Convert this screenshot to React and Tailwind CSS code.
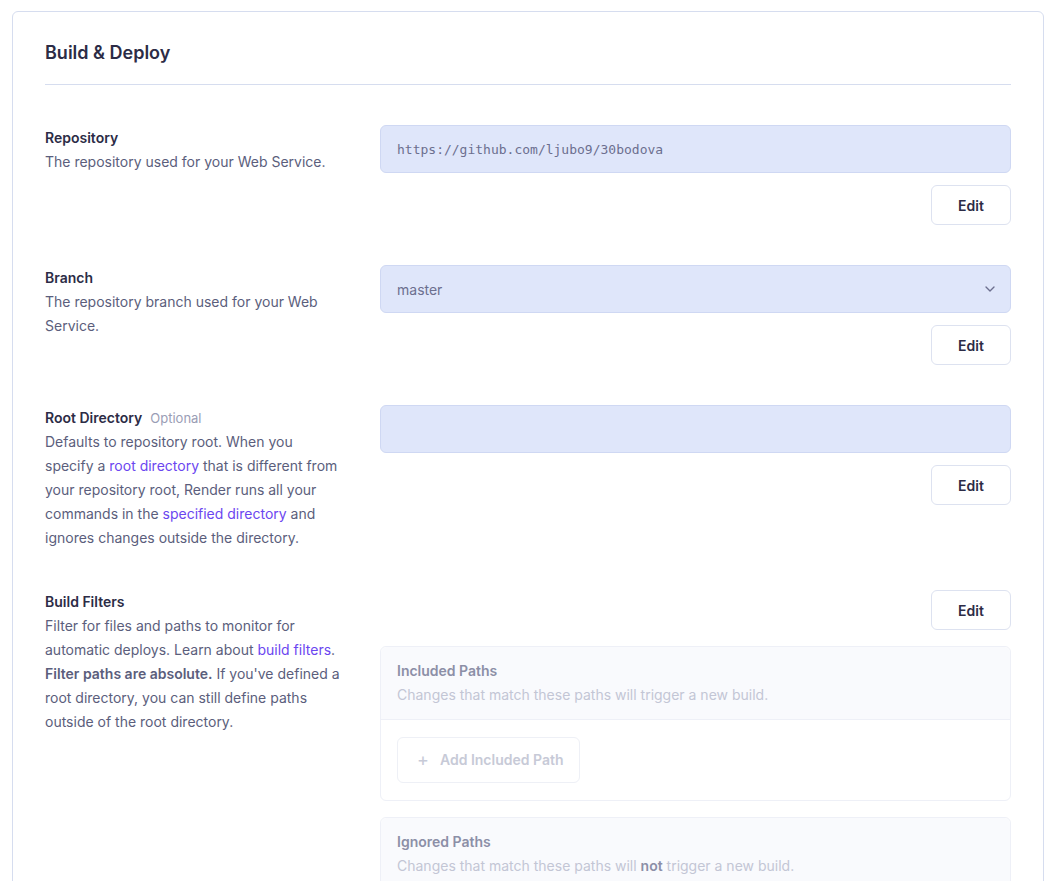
import React from "react";

const font = { fontFamily: "Inter, 'Noto Sans', sans-serif" };

function EditButton() {
  return (
    <button className="h-10 w-20 rounded-md border border-[#dde2f0] bg-white pt-[2px] text-sm font-semibold text-[#2c2c46]">
      Edit
    </button>
  );
}

function Row({ left, children }) {
  return (
    <div className="mb-10 flex gap-[39px]">
      <div className="w-[296px] shrink-0 translate-y-px text-sm leading-6 text-[#5b5e7c]">{left}</div>
      <div className="flex min-w-0 flex-1 flex-col">{children}</div>
    </div>
  );
}

function Label({ children, optional }) {
  return (
    <div className="font-semibold text-[#2c2c46]">
      {children}
      {optional && <span className="ml-2 text-[13px] font-normal text-[#9a9db5]">Optional</span>}
    </div>
  );
}

const Link = ({ children }) => <span className="text-[#6b46f0]">{children}</span>;

function PathBox({ title, desc, button }) {
  return (
    <div className="rounded-md border border-[#eef0f7]">
      <div className="rounded-t-md border-b border-[#eef0f7] bg-[#f9fafd] px-4 py-3 text-sm leading-6">
        <div className="font-semibold text-[#8c8fa7]">{title}</div>
        <div className="text-[#c3c6d5]">{desc}</div>
      </div>
      {button && (
        <div className="px-4 py-[17px]">
          <div className="inline-flex h-[46px] items-center gap-[11px] whitespace-nowrap rounded-md border border-[#eef0f6] pl-[19px] pr-[15px] text-sm font-semibold text-[#c7cad7]">
            <span className="text-lg font-normal leading-none">+</span>
            <span>{button}</span>
          </div>
        </div>
      )}
    </div>
  );
}

export default function App() {
  return (
    <div className="min-h-[881px] bg-white pl-3 pr-[8px] pt-[11px]" style={font}>
      <div className="h-[900px] rounded-md border border-[#d6ddef] bg-white px-8 pt-[29px]">
        <h2 className="border-b border-[#d6ddef] pb-[19px] text-lg font-semibold leading-6 text-[#2c2c46]">
          Build &amp; Deploy
        </h2>
        <div className="pt-10">
          <Row
            left={
              <>
                <Label>Repository</Label>
                <div>The repository used for your Web Service.</div>
              </>
            }
          >
            <div className="flex h-12 items-center rounded-md border border-[#cfd8f3] bg-[#dfe6fa] px-4 pt-[2px] text-[13px] text-[#6c6f8f]" style={{ fontFamily: "'DejaVu Sans Mono', monospace" }}>
              https://github.com/ljubo9/30bodova
            </div>
            <div className="mt-3 flex justify-end">
              <EditButton />
            </div>
          </Row>
          <Row
            left={
              <>
                <Label>Branch</Label>
                <div>The repository branch used for your Web Service.</div>
              </>
            }
          >
            <div className="flex h-12 items-center justify-between rounded-md border border-[#cfd8f3] bg-[#dfe6fa] pl-4 pr-3 text-sm text-[#6c6f8f]">
              <span className="pt-[2px]">master</span>
              <svg width="16" height="16" viewBox="0 0 24 24" fill="none" stroke="#6c6f8f" strokeWidth="2" strokeLinecap="round" strokeLinejoin="round">
                <path d="M6 9l6 6 6-6" />
              </svg>
            </div>
            <div className="mt-3 flex justify-end">
              <EditButton />
            </div>
          </Row>
          <Row
            left={
              <>
                <Label optional>Root Directory</Label>
                <div>
                  Defaults to repository root. When you specify a <Link>root directory</Link> that is different from
                  your repository root, Render runs all your commands in the <Link>specified directory</Link> and
                  ignores changes outside the directory.
                </div>
              </>
            }
          >
            <div className="h-12 rounded-md border border-[#cfd8f3] bg-[#dfe6fa]" />
            <div className="mt-3 flex justify-end">
              <EditButton />
            </div>
          </Row>
          <Row
            left={
              <>
                <Label>Build Filters</Label>
                <div>
                  Filter for files and paths to monitor for automatic deploys. Learn about <Link>build filters</Link>.{" "}
                  <span className="font-semibold">Filter paths are absolute.</span> If you've defined a root
                  directory, you can still define paths outside of the root directory.
                </div>
              </>
            }
          >
            <div className="mt-px flex justify-end">
              <EditButton />
            </div>
            <div className="mt-4 flex flex-col gap-4">
              <PathBox
                title="Included Paths"
                desc="Changes that match these paths will trigger a new build."
                button="Add Included Path"
              />
              <PathBox
                title="Ignored Paths"
                desc={
                  <>
                    Changes that match these paths will <span className="font-semibold text-[#8c8fa7]">not</span> trigger a new build.
                  </>
                }
                button="Add Ignored Path"
              />
            </div>
          </Row>
        </div>
      </div>
    </div>
  );
}
